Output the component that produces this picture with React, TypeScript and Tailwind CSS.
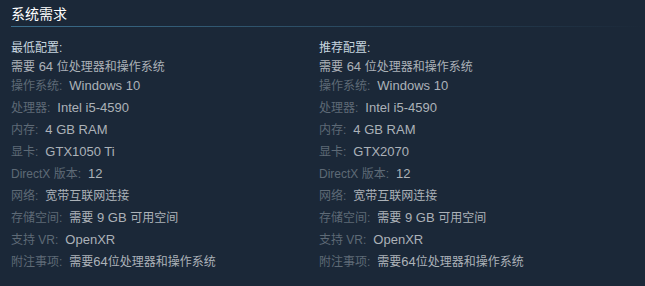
import React from "react";

const rowsLeft: [string, string][] = [
  ["操作系统:", "Windows 10"],
  ["处理器:", "Intel i5-4590"],
  ["内存:", "4 GB RAM"],
  ["显卡:", "GTX1050 Ti"],
  ["DirectX 版本:", "12"],
  ["网络:", "宽带互联网连接"],
  ["存储空间:", "需要 9 GB 可用空间"],
  ["支持 VR:", "OpenXR"],
  ["附注事项:", "需要64位处理器和操作系统"],
];

const rowsRight: [string, string][] = [
  ["操作系统:", "Windows 10"],
  ["处理器:", "Intel i5-4590"],
  ["内存:", "4 GB RAM"],
  ["显卡:", "GTX2070"],
  ["DirectX 版本:", "12"],
  ["网络:", "宽带互联网连接"],
  ["存储空间:", "需要 9 GB 可用空间"],
  ["支持 VR:", "OpenXR"],
  ["附注事项:", "需要64位处理器和操作系统"],
];

function Mixed({ text }: { text: string }) {
  const parts = text.split(/([\u3000-\u9fff\uff00-\uffef]+)/).filter((p) => p !== "");
  return (
    <>
      {parts.map((p, i) =>
        /[\u3000-\u9fff\uff00-\uffef]/.test(p) ? (
          <span key={i} className="text-[12px]">
            {p}
          </span>
        ) : (
          <span key={i}>{p}</span>
        )
      )}
    </>
  );
}

function Col({ title, rows }: { title: string; rows: [string, string][] }) {
  return (
    <div className="flex flex-col">
      <div className="h-[19px] leading-[19px] text-[12px] text-[#c6d4df]">{title}</div>
      <div className="h-[17px] leading-[17px] text-[13px] text-[#acb2b8]">
        <Mixed text="需要 64 位处理器和操作系统" />
      </div>
      {rows.map(([k, v]) => (
        <div key={k} className="h-[22px] leading-[22px] whitespace-nowrap">
          <span className="text-[12px] text-[#5e6a76]">{k}</span>
          <span className="ml-[7px] text-[13px] text-[#acb2b8]">
            <Mixed text={v} />
          </span>
        </div>
      ))}
    </div>
  );
}

export default function App() {
  return (
    <div
      className="w-[645px] h-[286px] bg-[#1b2838] pl-[11px] text-[12px]"
      style={{ fontFamily: '"Liberation Sans", Arial, "Noto Sans CJK SC", sans-serif' }}
    >
      <div className="h-[26px] pt-[5px] text-[14px] leading-[18px] text-white">系统需求</div>
      <div className="h-px bg-gradient-to-r from-[#3b6e8c] to-[#3b6e8c00]" />
      <div className="grid grid-cols-[308px_1fr] pt-[12px]">
        <Col title="最低配置:" rows={rowsLeft} />
        <Col title="推荐配置:" rows={rowsRight} />
      </div>
    </div>
  );
}
